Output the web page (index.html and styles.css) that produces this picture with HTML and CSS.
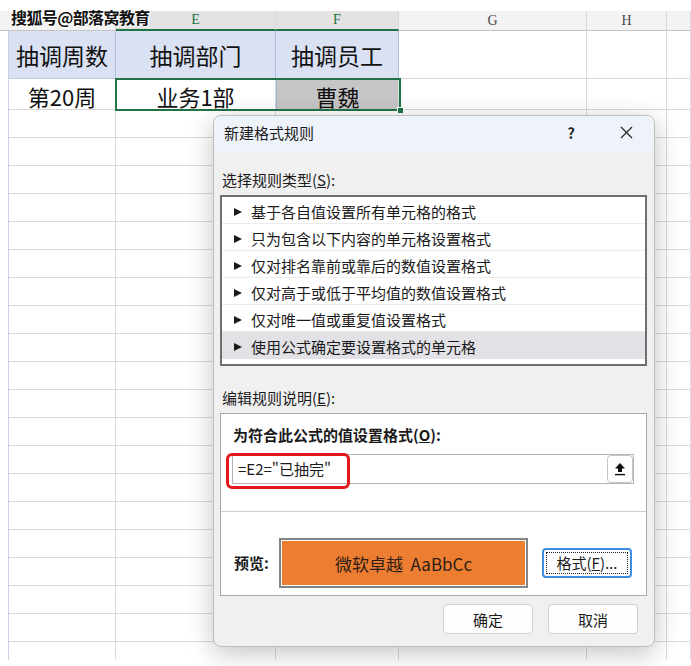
FILE: index.html
```html
<!DOCTYPE html>
<html lang="zh-CN">
<head>
    <meta charset="UTF-8">
    <meta name="viewport" content="width=device-width, initial-scale=1.0">
    <title>新建格式规则</title>
    <link rel="stylesheet" href="styles.css">
</head>
<body>
    <div class="sheet">
        <div class="strip"></div>

        <div class="hd first"></div>
        <div class="hd"></div>
        <div class="hd on">E</div>
        <div class="hd on">F</div>
        <div class="hd">G</div>
        <div class="hd">H</div>
        <div class="hd"></div>

        <div class="cell gap"></div>
        <div class="cell title">抽调周数</div>
        <div class="cell title">抽调部门</div>
        <div class="cell title">抽调员工</div>
        <div class="cell"></div>
        <div class="cell"></div>
        <div class="cell"></div>

        <div class="cell gap"></div>
        <div class="cell row2">第20周</div>
        <div class="cell row2">业务1部</div>
        <div class="cell row2 picked">曹魏</div>
        <div class="cell"></div>
        <div class="cell"></div>
        <div class="cell"></div>

        <div class="fill gap"></div>
        <div class="fill"></div>
        <div class="fill"></div>
        <div class="fill"></div>
        <div class="fill"></div>
        <div class="fill"></div>
        <div class="fill"></div>
    </div>

    <div class="watermark">搜狐号@部落窝教育</div>
    <div class="selection"><span class="handle"></span></div>

    <div class="dialog">
        <div class="titlebar">
            <span class="title">新建格式规则</span>
            <span class="help">?</span>
            <svg class="close" width="13" height="13" viewBox="0 0 13 13">
                <path d="M1 1 L12 12 M12 1 L1 12" stroke="#2b2b2b" stroke-width="1.3" fill="none"/>
            </svg>
        </div>
        <div class="body">
            <div class="label">选择规则类型(<u>S</u>):</div>
            <ul class="rules">
                <li>基于各自值设置所有单元格的格式</li>
                <li>只为包含以下内容的单元格设置格式</li>
                <li>仅对排名靠前或靠后的数值设置格式</li>
                <li>仅对高于或低于平均值的数值设置格式</li>
                <li>仅对唯一值或重复值设置格式</li>
                <li class="sel">使用公式确定要设置格式的单元格</li>
            </ul>

            <div class="label second">编辑规则说明(<u>E</u>):</div>
            <div class="editbox">
                <div class="formula-sec">
                    <div class="bold">为符合此公式的值设置格式(<u>O</u>):</div>
                    <div class="formula">
                        <span>=E2="已抽完"</span>
                        <span class="pick">
                            <svg width="12" height="14" viewBox="0 0 12 14">
                                <path d="M6 1 L11 6.5 H8 V10 H4 V6.5 H1 Z" fill="#111"/>
                                <path d="M1 12.6 H11" stroke="#111" stroke-width="1.4"/>
                            </svg>
                        </span>
                    </div>
                    <div class="mark"></div>
                </div>
                <div class="preview-sec">
                    <span class="bold pv-label">预览:</span>
                    <div class="preview"><div class="swatch">微软卓越&nbsp; AaBbCc</div></div>
                    <button class="fmt"><span>格式(<u>F</u>)...</span></button>
                </div>
            </div>

            <div class="footer">
                <button>确定</button>
                <button>取消</button>
            </div>
        </div>
    </div>
</body>
</html>
```

FILE: styles.css
```css
* {
    box-sizing: border-box;
}
body {
    margin: 0;
    width: 691px;
    height: 666px;
    overflow: hidden;
    position: relative;
    background: #fff;
    font-family: "Noto Sans CJK SC", sans-serif;
    color: #1a1a1a;
}

/* spreadsheet behind the dialog */
.sheet {
    display: grid;
    grid-template-columns: 9px 107px 160px 123px 188px 80px 24px;
    grid-template-rows: 11px 20px 48px 31px 550px;
}
.strip {
    grid-column: 1 / -1;
    background: #fff;
}
.hd {
    background: #f3f3f3;
    border-right: 1px solid #d8d8d8;
    border-bottom: 1px solid #c4c4c4;
    font-family: "Liberation Serif", serif;
    font-size: 14px;
    line-height: 19px;
    text-align: center;
    color: #4a4a4a;
}
.hd.first {
    border-right: none;
}
.hd.on {
    background: #e3e3e3;
    color: #217346;
    border-bottom: 2px solid #217346;
    line-height: 18px;
}
.cell {
    border-right: 1px solid #dadada;
    border-bottom: 1px solid #dadada;
    display: flex;
    align-items: center;
    justify-content: center;
    font-size: 23px;
    color: #111;
}
.cell.gap {
    border-right-color: #c9d2ea;
    border-bottom: none;
}
.cell.title {
    background: #d9e1f2;
    border-right-color: #aebfdf;
    border-bottom-color: #c4cde0;
}
.cell.row2 {
    font-size: 22px;
    padding-top: 3px;
}
.cell.picked {
    background: #c6c6c6;
    border-left: 1px solid #9fb0d0;
}
.fill {
    border-right: 1px solid #dadada;
    background: repeating-linear-gradient(to bottom, #fff 0 27px, #dadada 27px 28px);
}
.fill.gap {
    background: #fff;
    border-right-color: #c9d2ea;
}

.watermark {
    position: absolute;
    left: 11px;
    top: 7px;
    font-size: 16px;
    font-weight: bold;
    line-height: 20px;
    letter-spacing: -0.6px;
    color: #111;
    text-shadow: 1px 0 #fff, -1px 0 #fff, 0 1px #fff, 0 -1px #fff, 1px 1px #fff, -1px -1px #fff;
}
.selection {
    position: absolute;
    left: 115px;
    top: 78px;
    width: 286px;
    height: 33px;
    border: 2px solid #217346;
}
.handle {
    position: absolute;
    right: -5px;
    bottom: -5px;
    width: 7px;
    height: 7px;
    background: #217346;
    border: 1px solid #fff;
}

/* dialog */
.dialog {
    position: absolute;
    left: 213px;
    top: 115px;
    width: 442px;
    height: 532px;
    background: #f0f0f0;
    border: 1px solid #bdbdbd;
    border-radius: 8px;
    box-shadow: 0 6px 26px rgba(0, 0, 0, 0.24);
    overflow: hidden;
    font-size: 15px;
}
.titlebar {
    height: 37px;
    background: #eef2f9;
    display: flex;
    align-items: center;
    padding: 0 0 4px 10px;
    line-height: 18px;
}
.titlebar .title {
    flex: 1;
}
.help {
    width: 10px;
    text-align: center;
    font-weight: bold;
    color: #2b2b2b;
    margin-right: 44px;
}
.close {
    margin-right: 21px;
}
.body {
    padding: 0 7px 0 6px;
}
.label {
    margin: 18px 0 6px 2px;
    line-height: 18px;
}
.label.second {
    margin-top: 23px;
}
.rules {
    margin: 0;
    padding: 0;
    list-style: none;
    height: 171px;
    background: #fff;
    border: 2px solid #6f6f6f;
}
.rules li {
    height: 27px;
    display: flex;
    align-items: center;
    padding: 3px 0 0 12px;
    line-height: 18px;
    border-bottom: 1px solid #ececec;
}
.rules li:last-child {
    border-bottom: none;
}
.rules li::before {
    content: "";
    border-left: 8px solid #1a1a1a;
    border-top: 4.5px solid transparent;
    border-bottom: 4.5px solid transparent;
    margin-right: 9px;
}
.rules li.sel {
    background: #e1e1e6;
}

.editbox {
    height: 183px;
    background: #fff;
    border: 1px solid #a8a8a8;
}
.formula-sec {
    position: relative;
    height: 98px;
    padding: 12px 12px 0 11px;
    border-bottom: 1px solid #cfcfcf;
}
.bold {
    font-weight: bold;
    line-height: 18px;
    padding-left: 1px;
}
.formula {
    position: relative;
    margin-top: 10px;
    height: 30px;
    border: 1px solid #b5b5b5;
    display: flex;
    align-items: center;
    padding-left: 5px;
    line-height: 18px;
}
.pick {
    position: absolute;
    right: 0;
    top: 0;
    width: 26px;
    height: 28px;
    background: #fff;
    border: 1px solid #c6c6c6;
    border-radius: 4px;
    display: flex;
    align-items: center;
    justify-content: center;
}
.mark {
    position: absolute;
    left: 5px;
    top: 39px;
    width: 124px;
    height: 36px;
    border: 3px solid #e5161c;
    border-radius: 6px;
}
.preview-sec {
    display: flex;
    align-items: center;
    padding: 26px 0 0 12px;
}
.pv-label {
    width: 46px;
}
.preview {
    width: 249px;
    height: 50px;
    border: 2px solid #858585;
    padding: 1px;
    background: #fff;
}
.swatch {
    height: 100%;
    background: #ed7d31;
    display: flex;
    align-items: center;
    justify-content: center;
    font-size: 17px;
    color: #2d2016;
}
.fmt {
    margin-left: 14px;
    width: 90px;
    height: 30px;
    padding: 2px;
    background: #fff;
    border: 2px solid #3d8ee0;
    border-radius: 4px;
    font-family: inherit;
    font-size: 15px;
    color: #1a1a1a;
}
.fmt span {
    display: flex;
    height: 100%;
    align-items: center;
    justify-content: center;
    border: 1px dotted #222;
    line-height: 18px;
}
.footer {
    display: flex;
    justify-content: flex-end;
    gap: 15px;
    margin-top: 8px;
    padding-right: 9px;
}
.footer button {
    width: 90px;
    height: 30px;
    background: #fdfdfd;
    border: 1px solid #d2d2d2;
    border-radius: 4px;
    font-family: inherit;
    font-size: 15px;
    color: #1a1a1a;
}
```
